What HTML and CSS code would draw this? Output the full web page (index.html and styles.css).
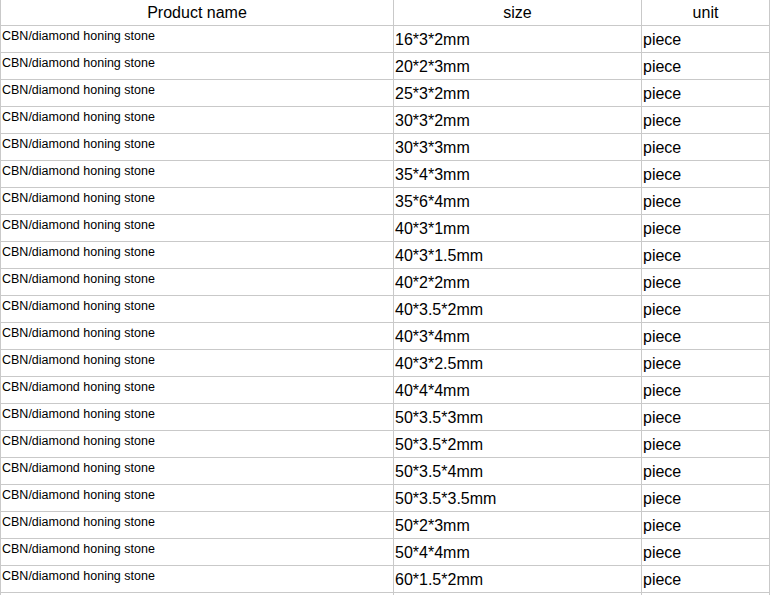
FILE: index.html
```html
<!DOCTYPE html>
<html>
<head>
<meta charset="utf-8">
<link rel="stylesheet" href="styles.css">
</head>
<body>
<table class="grid">
<colgroup><col class="c-name"><col class="c-size"><col class="c-unit"></colgroup>
<thead>
<tr><th>Product name</th><th>size</th><th>unit</th></tr>
</thead>
<tbody>
<tr><td class="name">CBN/diamond honing stone</td><td>16*3*2mm</td><td>piece</td></tr>
<tr><td class="name">CBN/diamond honing stone</td><td>20*2*3mm</td><td>piece</td></tr>
<tr><td class="name">CBN/diamond honing stone</td><td>25*3*2mm</td><td>piece</td></tr>
<tr><td class="name">CBN/diamond honing stone</td><td>30*3*2mm</td><td>piece</td></tr>
<tr><td class="name">CBN/diamond honing stone</td><td>30*3*3mm</td><td>piece</td></tr>
<tr><td class="name">CBN/diamond honing stone</td><td>35*4*3mm</td><td>piece</td></tr>
<tr><td class="name">CBN/diamond honing stone</td><td>35*6*4mm</td><td>piece</td></tr>
<tr><td class="name">CBN/diamond honing stone</td><td>40*3*1mm</td><td>piece</td></tr>
<tr><td class="name">CBN/diamond honing stone</td><td>40*3*1.5mm</td><td>piece</td></tr>
<tr><td class="name">CBN/diamond honing stone</td><td>40*2*2mm</td><td>piece</td></tr>
<tr><td class="name">CBN/diamond honing stone</td><td>40*3.5*2mm</td><td>piece</td></tr>
<tr><td class="name">CBN/diamond honing stone</td><td>40*3*4mm</td><td>piece</td></tr>
<tr><td class="name">CBN/diamond honing stone</td><td>40*3*2.5mm</td><td>piece</td></tr>
<tr><td class="name">CBN/diamond honing stone</td><td>40*4*4mm</td><td>piece</td></tr>
<tr><td class="name">CBN/diamond honing stone</td><td>50*3.5*3mm</td><td>piece</td></tr>
<tr><td class="name">CBN/diamond honing stone</td><td>50*3.5*2mm</td><td>piece</td></tr>
<tr><td class="name">CBN/diamond honing stone</td><td>50*3.5*4mm</td><td>piece</td></tr>
<tr><td class="name">CBN/diamond honing stone</td><td>50*3.5*3.5mm</td><td>piece</td></tr>
<tr><td class="name">CBN/diamond honing stone</td><td>50*2*3mm</td><td>piece</td></tr>
<tr><td class="name">CBN/diamond honing stone</td><td>50*4*4mm</td><td>piece</td></tr>
<tr><td class="name">CBN/diamond honing stone</td><td>60*1.5*2mm</td><td>piece</td></tr>
<tr><td class="name"></td><td></td><td></td></tr>
</tbody>
</table>
</body>
</html>
```
FILE: styles.css
```css
html, body {
  margin: 0;
  padding: 0;
  background: #ffffff;
}
.grid {
  border-collapse: separate;
  border-spacing: 0;
  table-layout: fixed;
  width: 770px;
  font-family: "Liberation Sans", Arial, sans-serif;
  color: #000000;
}
.c-name { width: 394px; }
.c-size { width: 248px; }
.c-unit { width: 128px; }
.grid th,
.grid td {
  box-sizing: border-box;
  border-right: 1px solid #c9c9c9;
  border-bottom: 1px solid #c9c9c9;
  padding: 0 0 0 1px;
  font-size: 16px;
  white-space: nowrap;
  overflow: hidden;
}
.grid th:first-child,
.grid td:first-child {
  border-left: 1px solid #c9c9c9;
}
.grid th {
  height: 26px;
  font-weight: normal;
  text-align: center;
  vertical-align: middle;
  padding: 0;
  line-height: 18px;
}
.grid td {
  height: 27px;
  line-height: 18px;
  vertical-align: middle;
  padding-top: 2px;
}
.grid td.name {
  font-size: 12.5px;
  line-height: 14px;
  vertical-align: top;
  padding-top: 3px;
}
```
